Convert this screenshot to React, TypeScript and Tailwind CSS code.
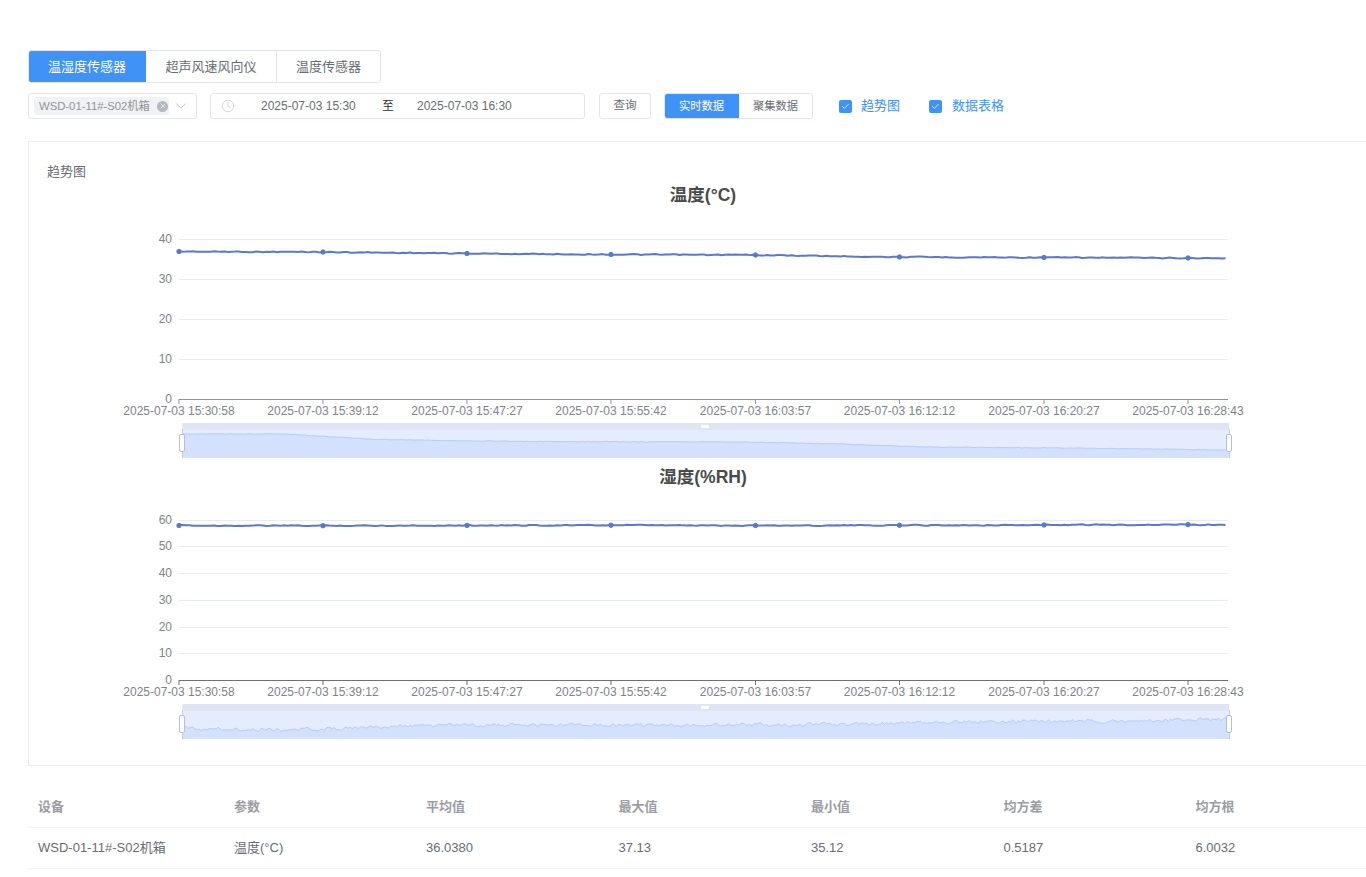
import { Check, ChevronDown, Clock, X } from "lucide-react";

const TICKS = [
  "2025-07-03 15:30:58",
  "2025-07-03 15:39:12",
  "2025-07-03 15:47:27",
  "2025-07-03 15:55:42",
  "2025-07-03 16:03:57",
  "2025-07-03 16:12:12",
  "2025-07-03 16:20:27",
  "2025-07-03 16:28:43",
];
const TICK_X = [132, 276, 420, 564, 708.5, 852.5, 997, 1141];
const LEFT = 132;
const RIGHT = 1181;

function interp(stops: number[][], x: number) {
  for (let i = 1; i < stops.length; i++) {
    if (x <= stops[i][0]) {
      const [x0, y0] = stops[i - 1];
      const [x1, y1] = stops[i];
      return y0 + ((y1 - y0) * (x - x0)) / (x1 - x0);
    }
  }
  return stops[stops.length - 1][1];
}

function noise(seed: number, i: number) {
  const v = Math.sin(i * 12.9898 + seed * 78.233) * 43758.5453;
  return (v - Math.floor(v)) * 2 - 1;
}

function series(stops: number[][], amp: number, seed: number, step: number, from: number, to: number) {
  const pts: [number, number][] = [];
  let i = 0;
  let prev = 0;
  for (let x = from; x <= to; x += step) {
    prev = prev * 0.3 + noise(seed, i) * 0.7;
    pts.push([x, interp(stops, x) + prev * amp]);
    i++;
  }
  return pts;
}

const toPath = (pts: [number, number][]) =>
  pts.map(([x, y], i) => `${i ? "L" : "M"}${x.toFixed(1)} ${y.toFixed(2)}`).join("");

type ChartProps = {
  title: string;
  titleY: number;
  labels: { y: number; text: string }[];
  line: number[][];
  lineSeed: number;
  mini: number[][];
  miniAmp: number;
  miniSeed: number;
  axis: string;
  className?: string;
};

function Chart({ title, labels, titleY, line, lineSeed, mini, miniAmp, miniSeed, axis, className }: ChartProps) {
  const base = labels[0].y;
  const main = series(line, 0.65, lineSeed, 3.5, LEFT, RIGHT);
  const top = base + 24;
  const bottom = top + 35;
  const m = series(mini, miniAmp, miniSeed, 2, 135.5, 1182);
  const area = `${toPath(m)}L1182 ${bottom}L135.5 ${bottom}Z`;
  return (
    <svg width={1312} height={282} className={`block ${className ?? ""}`} viewBox="0 0 1312 282">
      <text x={656} y={titleY} textAnchor="middle" fontSize={17.5} fontWeight={700} fill="#4a4a4a">
        {title}
      </text>
      {labels.slice(1).map((l) => (
        <line key={l.y} x1={LEFT} x2={RIGHT} y1={l.y + 0.5} y2={l.y + 0.5} stroke="#e6ebf5" />
      ))}
      <line x1={LEFT} x2={RIGHT} y1={base + 0.5} y2={base + 0.5} stroke={axis} />
      {TICK_X.map((x) => (
        <line key={x} x1={x} x2={x} y1={base} y2={base + 5} stroke={axis} />
      ))}
      {labels.map((l) => (
        <text key={l.text} x={125} y={l.y + 4} textAnchor="end" fontSize={12} fill="#80828a">
          {l.text}
        </text>
      ))}
      {TICKS.map((t, i) => (
        <text key={t} x={TICK_X[i]} y={base + 16} textAnchor="middle" fontSize={12} fill="#80828a">
          {t}
        </text>
      ))}
      <path d={toPath(main)} fill="none" stroke="#5b78cc" strokeWidth={2} strokeLinejoin="round" />
      {TICK_X.map((x) => (
        <circle key={x} cx={x} cy={interp(line, x)} r={2.2} fill="#5b78cc" stroke="#5b78cc" />
      ))}
      <rect x={135.5} y={top} width={1046.5} height={35} fill="#e5ecfd" />
      <rect x={135.5} y={top} width={1046.5} height={7} fill="#dfe5f3" />
      <path d={area} fill="#d3e1fc" />
      <path d={toPath(m)} fill="none" stroke="#b3cafb" strokeWidth={1} />
      <line x1={135.5} x2={135.5} y1={top + 6} y2={bottom} stroke="#c4cfe6" />
      <line x1={1182.5} x2={1182.5} y1={top + 6} y2={bottom} stroke="#c4cfe6" />
      <rect x={132.5} y={top + 11.5} width={5} height={17} rx={1.5} fill="#fff" stroke="#b4bfd8" />
      <rect x={1179.5} y={top + 11.5} width={5} height={17} rx={1.5} fill="#fff" stroke="#b4bfd8" />
      <rect x={654} y={top + 2} width={8} height={3} rx={1} fill="#fff" />
    </svg>
  );
}

const Sel = () => (
  <span className="flex h-[13px] w-[13px] items-center justify-center rounded-[2px] bg-[#3f92f8]">
    <Check size={9} color="#fff" strokeWidth={2} />
  </span>
);

const rowCols = "grid grid-cols-[196px_192px_192.5px_192.5px_192.5px_192px_192px] pl-[10px]";

export default function App() {
  return (
    <div className="h-[877px] w-[1366px] overflow-hidden bg-white pl-[28px] pt-[50px] font-['Liberation_Sans','Noto_Sans_CJK_SC',sans-serif] text-[12px] text-[#696c72]">
      <div className="flex h-[33px] w-[353px] overflow-hidden rounded-[3px] border border-[#e3e6ee] text-[13px]">
        <div className="-m-px flex w-[118px] items-center justify-center bg-[#3f92f8] text-white">温湿度传感器</div>
        <div className="ml-px flex w-[131px] items-center justify-center border-r border-[#e3e6ee]">超声风速风向仪</div>
        <div className="flex flex-1 items-center justify-center">温度传感器</div>
      </div>

      <div className="mt-[10px] flex h-[26px] items-center">
        <div className="flex h-[26px] w-[169px] items-center rounded-[3px] border border-[#e3e6ee] pl-[5px]">
          <div className="flex h-[18px] w-[135px] items-center justify-between rounded-[3px] bg-[#f0f2f5] pl-[5px] pr-[1px] text-[11.3px] text-[#909399]">
            <span>WSD-01-11#-S02机箱</span>
            <span className="flex h-[11px] w-[11px] items-center justify-center rounded-full bg-[#b4b7bd]">
              <X size={8} color="#fff" strokeWidth={2} />
            </span>
          </div>
          <ChevronDown size={18} color="#a8abb2" strokeWidth={1} className="ml-[3px]" />
        </div>

        <div className="ml-[13px] flex h-[26px] w-[375px] items-center rounded-[3px] border border-[#e3e6ee] pl-[10px]">
          <Clock size={14} color="#c0c4cc" strokeWidth={1.2} />
          <span className="ml-[26px] w-[95px]">2025-07-03 15:30</span>
          <span className="ml-[26px] text-[#303133]">至</span>
          <span className="ml-[23px]">2025-07-03 16:30</span>
        </div>

        <div className="ml-[14px] flex h-[26px] w-[52px] items-center justify-center rounded-[3px] border border-[#e3e6ee] text-[11.5px]">查询</div>

        <div className="ml-[13px] flex h-[26px] w-[149px] overflow-hidden rounded-[3px] border border-[#e3e6ee] text-[11.3px]">
          <div className="-m-px flex w-[75px] items-center justify-center bg-[#3f92f8] text-white">实时数据</div>
          <div className="ml-px flex flex-1 items-center justify-center">聚集数据</div>
        </div>

        <div className="ml-[26px] flex items-center gap-[9px] text-[13px] text-[#3f92f8]">
          <Sel />
          <span>趋势图</span>
        </div>
        <div className="ml-[29px] flex items-center gap-[10px] text-[13px] text-[#3f92f8]">
          <Sel />
          <span>数据表格</span>
        </div>
      </div>

      <div className="mt-[22px] h-[625px] w-[1360px] border border-[#e8eaef] pl-[18px] pt-[22px]">
        <div className="h-[18px] text-[13px] leading-[15px]">趋势图</div>
        <Chart
          title="温度(°C)"
          titleY={19}
          labels={[
            { y: 217, text: "0" },
            { y: 177, text: "10" },
            { y: 137, text: "20" },
            { y: 97, text: "30" },
            { y: 57, text: "40" },
          ]}
          line={[
            [132, 69.5],
            [276, 70],
            [420, 71.5],
            [564, 72.5],
            [708, 73],
            [852, 75],
            [997, 75.5],
            [1141, 76],
            [1181, 76.5],
          ]}
          lineSeed={1}
          mini={[
            [135.5, 252],
            [240, 252],
            [330, 257.5],
            [480, 259.5],
            [690, 260],
            [780, 261.5],
            [880, 265],
            [1020, 266],
            [1182, 268],
          ]}
          miniAmp={0.4}
          miniSeed={3}
          axis="#8f929b"
        />
        <Chart
          title="湿度(%RH)"
          titleY={20}
          labels={[
            { y: 217, text: "0" },
            { y: 190, text: "10" },
            { y: 164, text: "20" },
            { y: 137, text: "30" },
            { y: 110, text: "40" },
            { y: 83, text: "50" },
            { y: 57, text: "60" },
          ]}
          line={[
            [132, 62.5],
            [276, 62.7],
            [420, 62.4],
            [564, 62.2],
            [708, 62.5],
            [852, 62.3],
            [997, 62],
            [1141, 61.6],
            [1181, 61.8],
          ]}
          lineSeed={2}
          mini={[
            [135.5, 265],
            [240, 267],
            [400, 262],
            [600, 262],
            [800, 261.5],
            [960, 258],
            [1080, 258.5],
            [1182, 256],
          ]}
          miniAmp={2.2}
          miniSeed={5}
          axis="#6e7079"
          className="-mt-px"
        />
      </div>

      <div className="mt-[20px] w-[1360px]">
        <div className={`${rowCols} h-[42px] items-center border-b border-[#f0f2f6] text-[13px] font-bold text-[#9a9da3]`}>
          <span>设备</span>
          <span>参数</span>
          <span>平均值</span>
          <span>最大值</span>
          <span>最小值</span>
          <span>均方差</span>
          <span>均方根</span>
        </div>
        <div className={`${rowCols} h-[41px] items-center border-b border-[#f0f2f6] text-[13px]`}>
          <span>WSD-01-11#-S02机箱</span>
          <span>温度(°C)</span>
          <span>36.0380</span>
          <span>37.13</span>
          <span>35.12</span>
          <span>0.5187</span>
          <span>6.0032</span>
        </div>
      </div>
    </div>
  );
}
